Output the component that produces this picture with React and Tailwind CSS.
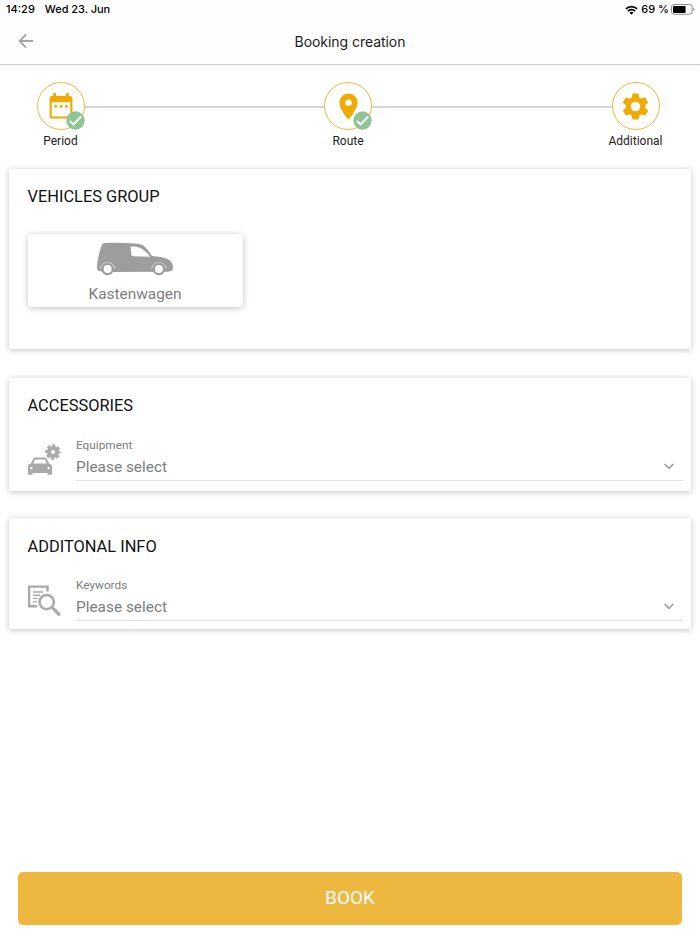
import React, { useState } from 'react';

// Icons
const WifiIcon = () => (
  <svg className="w-[13px] h-[10px]" viewBox="0 0 13 10" fill="none" stroke="#000" strokeWidth="1.8">
    <path d="M0.9 3.9a8 8 0 0111.2 0" />
    <path d="M2.9 6.1a5.1 5.1 0 017.2 0" />
    <path d="M6.5 9.7L4.5 7.6a2.9 2.9 0 014 0z" fill="#000" stroke="none" />
  </svg>
);

const BatteryIcon = () => (
  <svg className="w-[24px] h-[11px]" viewBox="0 0 24 11" fill="none">
    <rect x="0.5" y="0.5" width="20.6" height="9.8" rx="2.6" stroke="#8f8f8f" />
    <rect x="2" y="1.9" width="12.6" height="7" rx="1" fill="#000" />
    <path d="M22.3 3.7v3.4c.8-.3 1.2-1 1.2-1.7s-.4-1.4-1.2-1.7z" fill="#8f8f8f" />
  </svg>
);

const BackIcon = () => (
  <svg className="w-4 h-4" viewBox="0 0 16 16" fill="none" stroke="#a3a3a3" strokeWidth="1.8">
    <path d="M15 8H2M8 1.4L1.6 8L8 14.6" />
  </svg>
);

const CalendarIcon = () => (
  <svg className="w-[24px] h-[26px]" viewBox="0 0 24 26" fill="#f0ab00">
    <path fillRule="evenodd" d="M3 3h1.200V.8c0-.4.3-.7.7-.7h1.400c.4 0 .7.300.7.700V3h10V.8c0-.4.300-.7.700-.7h1.400c.4 0 .7.300.7.700V3H21c1.400 0 2.400 1 2.400 2.400v17.800c0 1.400-1 2.400-2.400 2.400H3c-1.400 0-2.400-1-2.400-2.400V5.400C.6 4 1.600 3 3 3zM2.700 9.300v13.200c0 .6.400 1 1 1h16.600c.6 0 1-.4 1-1V9.300z" />
    <circle cx="6.600" cy="13.300" r="1.500" />
    <circle cx="12" cy="13.300" r="1.500" />
    <circle cx="17.400" cy="13.300" r="1.500" />
  </svg>
);

const PinIcon = () => (
  <svg className="w-[31px] h-[31px]" viewBox="0 0 24 24" fill="#f0ab00">
    <path d="M12 2C8.130 2 5 5.130 5 9c0 5.250 7 13 7 13s7-7.750 7-13c0-3.870-3.130-7-7-7zm0 9.500a2.500 2.500 0 010-5 2.500 2.500 0 010 5z" />
  </svg>
);

const GearIcon = () => (
  <svg className="w-[31px] h-[31px]" viewBox="0 0 24 24" fill="#f0ab00">
    <path d="M19.430 12.980c.04-.32.07-.64.07-.98s-.03-.66-.07-.98l2.110-1.650c.19-.15.24-.42.12-.64l-2-3.460c-.12-.22-.39-.3-.61-.22l-2.490 1c-.52-.4-1.080-.73-1.690-.98l-.38-2.650C14.460 2.180 14.250 2 14 2h-4c-.25 0-.46.18-.49.42l-.38 2.650c-.61.25-1.170.59-1.690.98l-2.490-1c-.23-.09-.49 0-.61.22l-2 3.460c-.13.22-.07.49.12.64l2.110 1.650c-.04.32-.07.65-.07.98s.03.66.07.98l-2.110 1.650c-.19.15-.24.42-.12.64l2 3.460c.12.22.39.3.61.22l2.490-1c.52.4 1.080.73 1.690.98l.38 2.650c.03.24.24.42.49.42h4c.25 0 .46-.18.49-.42l.38-2.650c.61-.25 1.170-.59 1.690-.98l2.490 1c.23.09.49 0 .61-.22l2-3.460c.12-.22.07-.49-.12-.64l-2.110-1.650zM12 15.700a3.700 3.700 0 110-7.400 3.700 3.700 0 010 7.400z" />
  </svg>
);

const CheckBadge = () => (
  <svg className="absolute -right-px -bottom-px w-[19px] h-[19px]" viewBox="0 0 19 19">
    <circle cx="9.500" cy="9.500" r="9.200" fill="#8fc496" />
    <path d="M3.800 9.800l3.700 3.700 7.700-8" fill="none" stroke="#fff" strokeWidth="1.900" />
  </svg>
);

const VanIcon = () => (
  <svg className="w-[78px] h-[34px]" viewBox="0 0 78 34">
    <path fill="#9d9d9c" fillRule="evenodd" d="M6 2.800C6.400 1.600 7.200 1 8.600.9c8.200-.4 18.400-.3 27.200.3 4.800.4 8.800.9 11.200 2.100 3.600 2.600 6.200 6.600 9 10.800 6 .5 12 1.300 16.400 3.500 2.800 1.500 4.900 5 4.700 8.600-.2 2-2.600 3.400-6 3.500L19 30.100l-13.500-.6-3.500-1c-.8-.4-1-1.200-1-2.200C1.200 18 3.400 9 6 2.800zM35.600 4.600c-.8 0-1 .4-.9 1.100l.7 6.900c.1 1.200.7 1.700 1.900 1.700l16.900.4c-2.900-3.700-6.400-7.200-10.200-8.900-2.400-.9-5.400-1.200-8.400-1.200z" />
    <path d="M4.300 26.500a7.500 7.500 0 0114.600 0M55.600 26.500a7.500 7.500 0 0114.600 0" fill="none" stroke="#e0e0e0" strokeWidth="1" />
    <circle cx="11.600" cy="27" r="6.200" fill="#9d9d9c" />
    <circle cx="11.600" cy="27" r="4" fill="#fff" />
    <circle cx="62.900" cy="27" r="6.200" fill="#9d9d9c" />
    <circle cx="62.900" cy="27" r="4" fill="#fff" />
  </svg>
);

const EquipmentIcon = () => (
  <svg className="w-[34px] h-[32px]" viewBox="0 0 34 32" fill="#a9a9a9">
    <path fillRule="evenodd" d="M2.900 19.600l2-4.400c.5-1.100 1.300-1.600 2.400-1.600h9.300c1.100 0 1.900.5 2.400 1.600l2 4.400c1.900.4 3.100 1.600 3.100 3.400v7c0 .5-.3.800-.8.800h-3c-.5 0-.8-.3-.8-.8v-.9H4.600v.9c0 .5-.3.8-.8.8H.6c-.5 0-.8-.3-.8-.8v-7c0-1.800 1.200-3 3.100-3.400zM5.200 19.400h13.500l-1.400-3.100c-.2-.6-.6-.8-1.200-.8H7.800c-.6 0-1 .2-1.200.8zM3.300 22.900a1.200 1.200 0 000 2.400 1.200 1.200 0 000-2.400zM20.600 22.900a1.200 1.200 0 000 2.400 1.200 1.200 0 000-2.400z" />
    <circle cx="25" cy="8" r="4" fill="none" stroke="#a9a9a9" strokeWidth="4" />
    <circle cx="25" cy="8" r="6.500" fill="none" stroke="#a9a9a9" strokeWidth="2.400" strokeDasharray="3.200 1.905" strokeDashoffset="1.600" />
  </svg>
);

const KeywordsIcon = () => (
  <svg className="w-[34px] h-[32px]" viewBox="0 0 34 32" fill="none" stroke="#a9a9a9">
    <path d="M19.500 7.500V2.600H1.100v19.600H9.300" strokeWidth="2.400" />
    <path d="M5 8h10M5 11.200h7M5 14.400h4.600M5 17.600h4" strokeWidth="1.400" />
    <circle cx="18.700" cy="18.100" r="7.200" strokeWidth="2.500" />
    <path d="M24 23.300l2.200 2.200" strokeWidth="2.400" />
    <path d="M26.200 25.500l4.600 4.600" strokeWidth="3.400" strokeLinecap="round" />
  </svg>
);

const ChevronIcon = () => (
  <svg className="mb-[1px] w-[10px] h-[7px]" viewBox="0 0 10 7" fill="none" stroke="#9e9e9e" strokeWidth="1.700">
    <path d="M.6 1L5 5.400L9.400 1" />
  </svg>
);

const steps = [
  { label: 'Period', icon: CalendarIcon, done: true },
  { label: 'Route', icon: PinIcon, done: true },
  { label: 'Additional', icon: GearIcon, done: false },
];

const Step = ({ label, icon: Icon, done }) => (
  <div className="w-[48px] flex flex-col items-center">
    <div className="relative w-[48px] h-[48px] shrink-0 rounded-full border border-[#f2b83d] bg-white flex items-center justify-center">
      <Icon />
      {done && <CheckBadge />}
    </div>
    <span className="mt-[3px] text-[12px] leading-4 text-[#222] whitespace-nowrap">{label}</span>
  </div>
);

const Card = ({ title, className, children }) => (
  <section className={`mx-[9px] pl-[18.5px] bg-white shadow-[0_1px_6px_rgba(0,0,0,0.24)] ${className}`}>
    <h2 className="text-[16.4px] leading-5 text-[#111]">{title}</h2>
    {children}
  </section>
);

const SelectField = ({ label, icon: Icon, onClick }) => (
  <div className="flex pr-[8px]">
    <div className="w-[48.5px] shrink-0 pt-[8px]"><Icon /></div>
    <button type="button" onClick={onClick} className="flex-1 h-[45px] border-b border-[#e4e4e4] text-left text-[#7d7d7d]">
      <span className="block text-[11.8px] leading-[14px]">{label}</span>
      <span className="mt-[4px] flex items-center justify-between pr-[9px] text-[15.4px] leading-[22px]">
        Please select
        <ChevronIcon />
      </span>
    </button>
  </div>
);

function App() {
  const [selected, setSelected] = useState(false);

  return (
    <div className="h-[934px] w-full flex flex-col bg-white overflow-hidden font-['Roboto',sans-serif]">
      <header className="h-[65px] shrink-0 bg-[#fdfdfd] border-b border-[#d0d0d0] shadow-[0_1px_4px_rgba(0,0,0,0.06)]">
        <div className="h-[19px] pl-[6px] pr-[5px] flex items-center justify-between font-['Inter',sans-serif] text-[11px] font-medium text-black">
          <div className="flex gap-[10px]">
            <span>14:29</span>
            <span className="tracking-[-0.05px]">Wed 23. Jun</span>
          </div>
          <div className="flex items-center">
            <WifiIcon />
            <span className="ml-[3px] mr-[2px]">69 %</span>
            <BatteryIcon />
          </div>
        </div>
        <div className="h-[45px] grid grid-cols-3 items-center px-[18px]">
          <button type="button" className="w-4 mb-[2px]"><BackIcon /></button>
          <h1 className="text-center font-['Inter',sans-serif] text-[14px] tracking-[-0.05px] text-[#1c1c1c]">Booking creation</h1>
        </div>
      </header>

      <nav className="mt-[17px] ml-[36.5px] mr-[40.5px] h-[66px] shrink-0 flex">
        {steps.map((step, i) => (
          <React.Fragment key={step.label}>
            {i > 0 && <div className="mt-[24px] h-[2px] flex-1 bg-[#d6d6d6]" />}
            <Step {...step} />
          </React.Fragment>
        ))}
      </nav>

      <Card title="VEHICLES GROUP" className="mt-[21px] h-[180px] pt-[18px] shrink-0">
        <button
          type="button"
          onClick={() => setSelected(!selected)}
          className="mt-[27px] w-[215px] h-[73px] pt-[8px] flex flex-col items-center rounded-[4px] bg-white shadow-[0_1px_6px_rgba(0,0,0,0.26)]"
        >
          <VanIcon />
          <span className="mt-[8px] text-[15.4px] leading-5 text-[#7d7d7d]">Kastenwagen</span>
        </button>
      </Card>

      <Card title="ACCESSORIES" className="mt-[29px] h-[113px] pt-[18px] pb-[10px] shrink-0 flex flex-col justify-between">
        <SelectField label="Equipment" icon={EquipmentIcon} />
      </Card>

      <Card title="ADDITONAL INFO" className="mt-[27px] h-[111px] pt-[19px] pb-[8px] shrink-0 flex flex-col justify-between">
        <SelectField label="Keywords" icon={KeywordsIcon} />
      </Card>

      <button type="button" className="mt-auto mx-[18px] mb-[9.5px] h-[53px] shrink-0 pt-px rounded-[5px] bg-[#eeb73f] text-[19px] text-white">
        BOOK
      </button>
    </div>
  );
}

export default App;
